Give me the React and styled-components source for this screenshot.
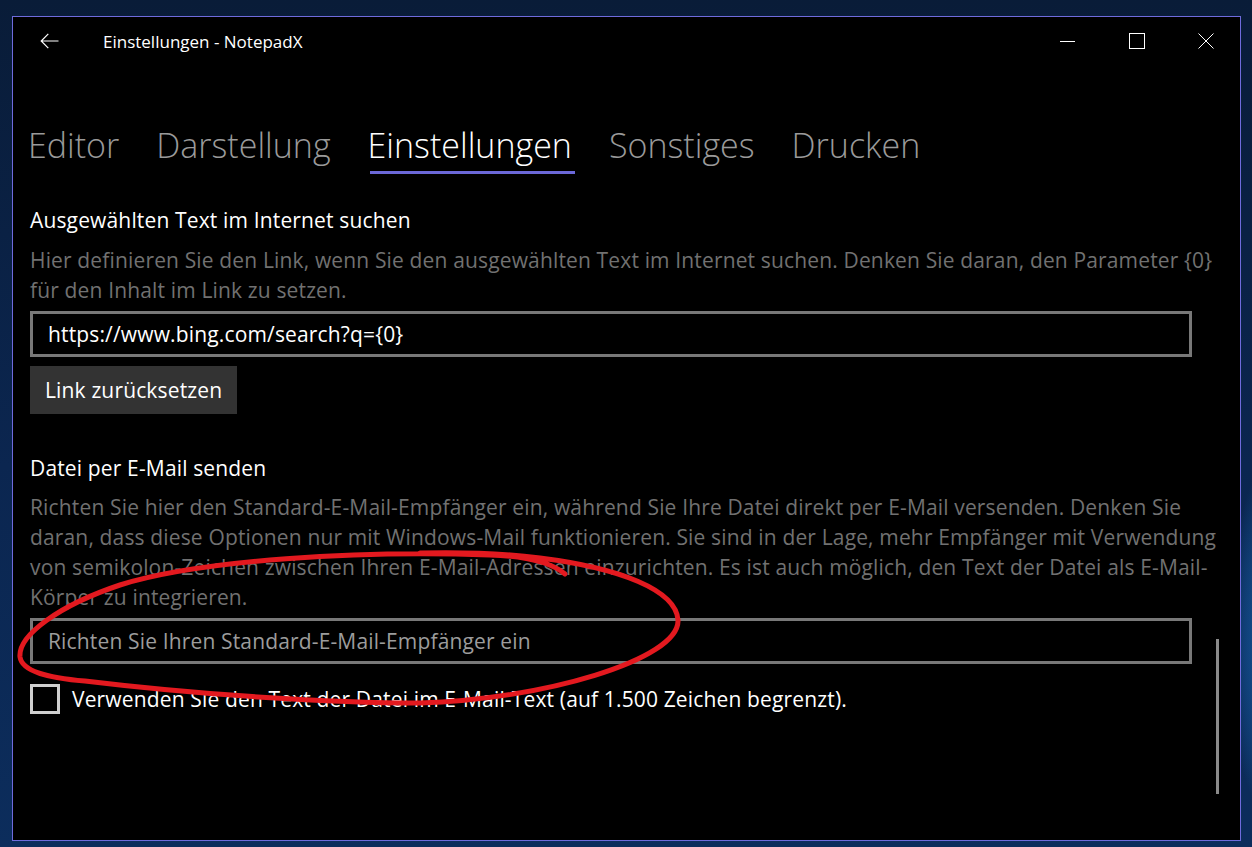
import React from 'react'
import styled, { createGlobalStyle } from 'styled-components'

const GlobalStyle = createGlobalStyle`
  html, body {
    margin: 0;
    padding: 0;
    overflow: hidden;
  }
  body {
    font-family: "Open Sans", "Noto Sans", sans-serif;
  }
  * { box-sizing: border-box; }
`

const Desktop = styled.div`
  position: relative;
  width: 1252px;
  height: 847px;
  padding: 16px 11px 6px 12px;
  background:
    radial-gradient(ellipse 260px 420px at 1420px 640px, #4fb0f4 0%, #1f82dc 45%, rgba(20,90,180,0) 75%),
    linear-gradient(180deg, #091c38 0%, #0b2650 55%, #0c2d5c 100%);
`

const Window = styled.div`
  position: relative;
  width: 1229px;
  height: 825px;
  border: 1px solid #6f6bdc;
  background: #000;
  display: flex;
  flex-direction: column;
  overflow: hidden;
  color: #fff;
`

const TitleBar = styled.div`
  height: 48px;
  display: flex;
  align-items: center;
  flex-shrink: 0;
`

const BackButton = styled.div`
  width: 72px;
  height: 48px;
  display: flex;
  align-items: center;
  justify-content: center;
`

const Title = styled.div`
  margin-left: 18px;
  font-size: 17px;
  color: #fff;
  flex: 1;
`

const CaptionButton = styled.div`
  width: 69px;
  height: 48px;
  display: flex;
  align-items: center;
  justify-content: center;
`

const Pivot = styled.div`
  display: flex;
  gap: 37px;
  margin-top: 56px;
  padding-left: 15px;
`

const Tab = styled.div`
  display: flex;
  flex-direction: column;
  font-size: 34px;
  font-weight: 300;
  line-height: 48px;
  color: ${p => (p.active ? '#fff' : '#9a9a9a')};
  &::after {
    content: '';
    height: 3px;
    margin-top: 2px;
    margin-left: 2px;
    margin-right: -3px;
    background: ${p => (p.active ? '#6b68d8' : 'transparent')};
  }
`

const Content = styled.div`
  flex: 1;
  padding: 31px 19px 0 17px;
  font-size: 21px;
  letter-spacing: 0.15px;
`

const Heading = styled.div`
  line-height: 30px;
  color: #fff;
  margin-top: ${p => p.gap || 0}px;
`

const Description = styled.p`
  margin: ${p => p.gap || 10}px 0 0;
  line-height: 30px;
  color: #717171;
`

const TextBox = styled.input`
  display: block;
  margin-top: 6px;
  width: 1162px;
  height: 46px;
  border: 3px solid #787878;
  background: transparent;
  color: #fff;
  font-family: inherit;
  font-size: 21px;
  letter-spacing: 0.15px;
  padding: 0 0 0 15px;
  outline: none;
  &::placeholder {
    color: #9c9c9c;
  }
`

const Button = styled.button`
  display: block;
  margin-top: 9px;
  height: 48px;
  padding: 0 15px;
  border: none;
  background: #333;
  color: #fff;
  font-family: inherit;
  font-size: 21px;
  letter-spacing: 0.15px;
`

const CheckRow = styled.label`
  display: flex;
  align-items: center;
  margin-top: 20px;
  line-height: 30px;
`

const CheckBox = styled.span`
  width: 30px;
  height: 30px;
  border: 3px solid #cfcfcf;
  margin-right: 12px;
  flex-shrink: 0;
`

const ScrollIndicator = styled.div`
  position: absolute;
  left: 1203px;
  top: 622px;
  width: 3px;
  height: 155px;
  background: #8a8a8a;
`

const Annotation = styled.svg`
  position: absolute;
  left: 0;
  top: 0;
  pointer-events: none;
`

const tabs = ['Editor', 'Darstellung', 'Einstellungen', 'Sonstiges', 'Drucken']

export default function App() {
  return (
    <>
      <GlobalStyle />
      <Desktop>
        <Window>
          <TitleBar>
            <BackButton>
              <svg width="19" height="16" viewBox="0 0 19 16">
                <path d="M18.5 8H1.2M8.3 0.8L1.2 8l7.1 7.2" fill="none" stroke="#fff" strokeWidth="1.2" />
              </svg>
            </BackButton>
            <Title>Einstellungen - NotepadX</Title>
            <CaptionButton>
              <svg width="15" height="15" viewBox="0 0 15 15">
                <path d="M0 7.5h15" stroke="#fff" strokeWidth="1" />
              </svg>
            </CaptionButton>
            <CaptionButton>
              <svg width="16" height="16" viewBox="0 0 16 16">
                <rect x="0.5" y="0.5" width="15" height="15" fill="none" stroke="#fff" strokeWidth="1" />
              </svg>
            </CaptionButton>
            <CaptionButton>
              <svg width="16" height="16" viewBox="0 0 16 16">
                <path d="M0.5 0.5l15 15M15.5 0.5l-15 15" stroke="#fff" strokeWidth="1" />
              </svg>
            </CaptionButton>
          </TitleBar>

          <Pivot>
            {tabs.map(t => (
              <Tab key={t} active={t === 'Einstellungen'}>{t}</Tab>
            ))}
          </Pivot>

          <Content>
            <Heading>Ausgewählten Text im Internet suchen</Heading>
            <Description>
              Hier definieren Sie den Link, wenn Sie den ausgewählten Text im Internet suchen. Denken Sie daran, den Parameter {'{0}'} für den Inhalt im Link zu setzen.
            </Description>
            <TextBox readOnly value="https://www.bing.com/search?q={0}" />
            <Button>Link zurücksetzen</Button>

            <Heading gap={39}>Datei per E-Mail senden</Heading>
            <Description gap={9}>
              Richten Sie hier den Standard-E-Mail-Empfänger ein, während Sie Ihre Datei direkt per E-Mail versenden. Denken Sie daran, dass diese Optionen nur mit Windows-Mail funktionieren. Sie sind in der Lage, mehr Empfänger mit Verwendung von semikolon-Zeichen zwischen Ihren E-Mail-Adressen einzurichten. Es ist auch möglich, den Text der Datei als E-Mail-Körper zu integrieren.
            </Description>
            <TextBox readOnly placeholder="Richten Sie Ihren Standard-E-Mail-Empfänger ein" />
            <CheckRow>
              <CheckBox />
              Verwenden Sie den Text der Datei im E-Mail-Text (auf 1.500 Zeichen begrenzt).
            </CheckRow>
          </Content>
          <ScrollIndicator />
        </Window>

        <Annotation width="1252" height="847" viewBox="0 0 1252 847">
          <path
            d="M565 574 C548 560 520 556 490 555 C360 550 200 560 120 585 C60 605 18 635 20 657 C22 672 50 678 85 681 C200 695 330 703 420 703 C540 700 680 660 678 620 C676 590 620 568 540 558 C500 553 460 552 420 553"
            fill="none"
            stroke="#e3191f"
            strokeWidth="5"
            strokeLinecap="round"
          />
        </Annotation>
      </Desktop>
    </>
  )
}
